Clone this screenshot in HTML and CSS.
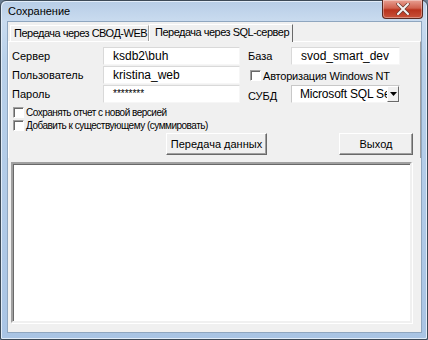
FILE: index.html
```html
<!DOCTYPE html>
<html>
<head>
<meta charset="utf-8">
<link rel="stylesheet" href="styles.css">
</head>
<body>
<div class="window">
  <div class="titlebar">
    <span class="title">Сохранение</span>
    <div class="close"><svg width="14" height="12" viewBox="0 0 14 12"><path d="M2 1 L12 11 M12 1 L2 11" stroke="#6a3a32" stroke-width="3.4" stroke-linecap="round"/><path d="M2 1 L12 11 M12 1 L2 11" stroke="#f4f4f4" stroke-width="2" stroke-linecap="round"/></svg></div>
  </div>
  <div class="client">
    <div class="tabs">
      <div class="tab">Передача через СВОД-WEB</div>
      <div class="tab active">Передача через SQL-сервер</div>
    </div>
    <div class="panel">
      <div class="form">
        <div class="lbl">Сервер</div>
        <div class="inp">ksdb2\buh</div>
        <div class="lbl rl">База</div>
        <div class="inp rinp">svod_smart_dev</div>

        <div class="lbl">Пользователь</div>
        <div class="inp">kristina_web</div>
        <div class="chkrow auth"><span class="box"></span>Авторизация Windows NT</div>

        <div class="lbl">Пароль</div>
        <div class="inp pw">********</div>
        <div class="lbl rl low">СУБД</div>
        <div class="select"><span class="seltext">Microsoft SQL Server</span><span class="arrow"><svg width="7" height="4" viewBox="0 0 7 4"><path d="M0 0 H7 L3.5 4 Z" fill="#000"/></svg></span></div>
      </div>
      <div class="checks">
        <div class="chkrow small"><span class="box"></span>Сохранять отчет с новой версией</div>
        <div class="chkrow small"><span class="box"></span>Добавить к существующему (суммировать)</div>
      </div>
      <div class="buttons">
        <div class="btn send">Передача данных</div>
        <div class="btn exit">Выход</div>
      </div>
    </div>
    <div class="log"></div>
  </div>
</div>
</body>
</html>
```
FILE: styles.css
```css
* { box-sizing: border-box; }
html, body { margin: 0; padding: 0; }
body {
  width: 428px; height: 340px; overflow: hidden;
  font-family: "Liberation Sans", Arial, sans-serif;
  font-size: 11px; color: #000;
  background: #6b7f94;
}
.window {
  width: 428px; height: 340px;
  border: 1px solid #3d4a57;
  border-radius: 6px 6px 2px 2px;
  background: linear-gradient(180deg, #b7cde6 0px, #c9dbef 20px, #b9d1ea 60px, #a9c4e4 340px);
  display: flex; flex-direction: column;
  padding: 0 5px 6px 6px;
  box-shadow: inset 1px 1px 0 #e2edf9, inset -1px -1px 0 #e2edf9;
}
.titlebar {
  height: 20px; position: relative;
  display: flex; align-items: center;
}
.title { padding-left: 1px; font-size: 11px; color: #000; margin-top: 0; }
.close {
  position: absolute; right: -1px; top: -1px;
  width: 41px; height: 19px;
  border: 1px solid #5a2a22; border-top: none;
  border-radius: 0 0 4px 4px;
  background: linear-gradient(180deg, #e8a093 0%, #d0614e 45%, #b8321c 55%, #c8523a 100%);
  display: flex; align-items: center; justify-content: center;
  box-shadow: inset 0 0 0 1px rgba(255,255,255,0.35);
}
.client {
  flex: 1;
  background: #f0f0f0;
  border: 1px solid #8fa6bf;
  display: flex; flex-direction: column;
  padding: 1px 0 0 0;
}
.tabs { display: flex; height: 18px; align-items: flex-end; padding-left: 2px; }
.tab {
  height: 16px; padding: 0 0 0 3px;
  border: 1px solid #fff; border-bottom: none;
  border-right: 1px solid #a0a0a0;
  line-height: 15px; font-size: 11px; letter-spacing: -0.5px;
  background: #f0f0f0;
  width: 139px; white-space: nowrap; overflow: hidden;
}
.tab.active {
  height: 18px; width: 144px; margin-bottom: -1px; position: relative; z-index: 1;
  border-right: 1px solid #696969;
  line-height: 15px; padding-left: 5px;
}
.panel {
  border-top: 1px solid #fff; border-left: 1px solid #fff;
  border-right: 1px solid #a0a0a0;
  padding: 5px 0 0 3px;
  height: 117px;
}
.form {
  display: grid;
  grid-template-columns: 91px 137px 8px 43px 109px;
  grid-template-rows: 19px 19px 19px;
}
.form .rl { grid-column: 4; }
.form .rinp, .form .select { grid-column: 5; }
.form .auth { grid-column: 4 / span 2; }
.lbl { line-height: 19px; padding-top: 0; white-space: nowrap; }
.lbl.low { padding-top: 3px; line-height: 16px; }
.inp {
  background: #fff; height: 18px; font-size: 12px;
  border: 1px solid; border-color: #d9d9d9 #f6f6f6 #f6f6f6 #d9d9d9;
  padding-left: 9px; line-height: 16px; white-space: nowrap; overflow: hidden;
}
.inp.pw { font-size: 10px; line-height: 16px; }
.select {
  background: #fff; height: 18px;
  border: 1px solid; border-color: #c8c8c8 #f6f6f6 #f6f6f6 #c8c8c8;
  display: flex; align-items: center; overflow: hidden;
  font-size: 12px; letter-spacing: -0.2px;
}
.seltext { flex: 1; padding-left: 8px; white-space: nowrap; overflow: hidden; line-height: 16px; }
.arrow {
  width: 12px; height: 16px; background: #f0f0f0; flex: none;
  border: 1px solid; border-color: #fff #696969 #696969 #fff;
  display: flex; align-items: center; justify-content: center;
}
.chkrow { display: flex; align-items: center; white-space: nowrap; }
.chkrow.auth { padding-left: 2px; padding-top: 0px; letter-spacing: -0.2px; }
.box {
  width: 11px; height: 11px; background: #fff;
  border: 1px solid; border-color: #a0a0a0 #fff #fff #a0a0a0;
  box-shadow: inset 1px 1px 0 #696969;
  margin-right: 2px; flex: none;
}
.checks { padding-left: 1px; margin-top: 2px; display: flex; flex-direction: column; }
.chkrow.small { font-size: 10px; height: 13px; letter-spacing: -0.5px; }
.buttons { display: flex; margin-top: 1px; padding-left: 154px; }
.btn {
  height: 22px; line-height: 20px; text-align: center; white-space: nowrap;
  background: #f0f0f0;
  border: 1px solid; border-color: #fff #696969 #696969 #fff;
  box-shadow: inset -1px -1px 0 #a0a0a0;
}
.btn.send { width: 101px; }
.btn.exit { width: 74px; margin-left: 72px; }
.log {
  margin: 4px 0 0 3px; width: 401px; height: 161px;
  background: #fff;
  border: 2px solid; border-color: #a0a0a0 #f0f0f0 #f0f0f0 #a0a0a0;
  box-shadow: inset 1px 1px 0 #696969, 1px 1px 0 #fff;
}
```
